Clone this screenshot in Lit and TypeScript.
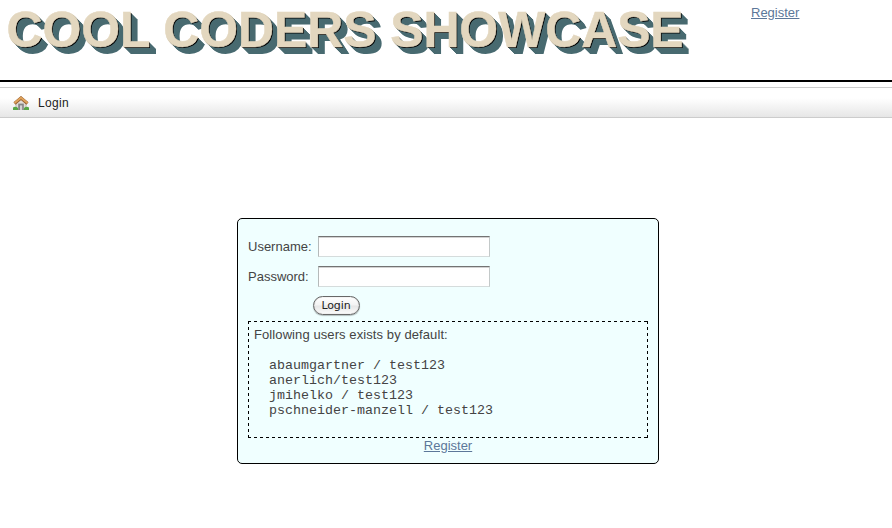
import { LitElement, html, css, svg } from "lit";
import { customElement } from "lit/decorators.js";

const users = [
  "abaumgartner / test123",
  "anerlich/test123",
  "jmihelko / test123",
  "pschneider-manzell / test123",
];

const houseIcon = svg`
  <path d="M3 7.500L8 3l5 4.500v6H3z" fill="#e2ddd8" stroke="#a9a5a1" stroke-width=".7"/>
  <path d="M5.200 7.600h5.600V14H5.200z" fill="#858585"/>
  <path d="M7 9.400h2.200V14H7z" fill="#d2d2d2"/>
  <path d="M0 11.500q2.500-1.800 5 .5V14H0zM11 12q2.500-2.300 5-.5V14h-5z" fill="#57a848"/>
  <path d="M1.500 7.400L8 2l6.500 5.400" fill="none" stroke="#98602f" stroke-width="3.200"/>
  <path d="M1.500 7L8 1.700 14.500 7" fill="none" stroke="#dfa25c" stroke-width="2"/>
`;

@customElement("app-root")
export class AppRoot extends LitElement {
  static styles = css`
    :host {
      display: block;
      height: 528px;
      overflow: hidden;
      background: #fff;
      color: #444;
      font: 13px/15px "Liberation Sans", Arial, sans-serif;
    }
    a { color: #5c7799; text-decoration: underline; }
    .header {
      display: flex;
      box-sizing: border-box;
      height: 82px;
      border-bottom: 2px solid #000;
    }
    .brand { width: 751px; flex: none; }
    .title {
      margin: 0;
      padding: 2px 0 0 6.500px;
      white-space: nowrap;
      font-size: 50px;
      line-height: 57px;
      font-weight: bold;
      letter-spacing: -0.13px;
      color: #e3d7bf;
      -webkit-text-stroke: 0.5px #e3d7bf;
      text-shadow: 1px 1px 0 #000, 2px 2px 0 #486a70, 3px 3px 0 #486a70,
        4px 4px 0 #486a70, 5px 5px 0 #486a70, 6px 6px 0 #486a70, 7px 7px 0 #486a70;
    }
    .top-link { padding-top: 5px; }
    .nav {
      display: flex;
      align-items: center;
      gap: 9px;
      box-sizing: border-box;
      height: 31px;
      margin-top: 5px;
      padding-left: 13px;
      border: solid #ccc;
      border-width: 1px 0;
      background: linear-gradient(#fff 0, #fff 35%, #e6e6e6 100%);
      color: #222;
      font-size: 12px;
      letter-spacing: 0.3px;
    }
    .crumb { padding-top: 2px; }
    .house { width: 16px; height: 16px; display: block; margin-top: 2px; }
    .panel {
      box-sizing: border-box;
      width: 422px;
      height: 246px;
      margin: 100px 0 0 237px;
      padding: 17px 10px 0;
      border: 1px solid #000;
      border-radius: 5px;
      background: #f0ffff;
    }
    .row { display: flex; height: 30px; }
    .label { width: 70px; padding-top: 3px; }
    .field {
      box-sizing: border-box;
      width: 172px;
      height: 21px;
      padding: 1px 3px;
      border: 1px solid;
      border-color: #737373 #c3c9c9 #d5dcdc #b5baba;
      border-radius: 0;
      box-shadow: inset 0 1px 0 #d3d3d3;
      background: #fff;
      outline: none;
    }
    .submit {
      display: block;
      box-sizing: border-box;
      width: 47px;
      height: 19px;
      margin: 0 0 6px 64.500px;
      padding: 0;
      border: 1px solid #686868;
      border-radius: 10px;
      background: linear-gradient(#fff, #f3f3f3 48%, #e6e6e6 52%, #fbfbfb);
      box-shadow: inset 0 0 1px #999, 0 1px 1px #b4c0c0;
      color: #222;
      font: 11px/14px "DejaVu Sans", sans-serif;
      letter-spacing: -0.1px;
    }
    .hint {
      box-sizing: border-box;
      height: 117px;
      padding: 6px 6px 0;
      --h: repeating-linear-gradient(90deg, #000 0 3px, transparent 3px 6px);
      --v: repeating-linear-gradient(#000 0 3px, transparent 3px 6px);
      background: var(--h) 0 0 / 100% 1px no-repeat, var(--h) 0 100% / 100% 1px no-repeat,
        var(--v) 0 0 / 1px 100% no-repeat, var(--v) 100% 0 / 1px 100% no-repeat;
    }
    .intro { letter-spacing: 0.09px; }
    .users {
      margin: 16px 0 0 15px;
      font: 13.33px/15px "Liberation Mono", "Courier New", monospace;
    }
    .bottom { text-align: center; }
  `;

  render() {
    return html`
      <header class="header">
        <div class="brand"><h1 class="title">COOL CODERS SHOWCASE</h1></div>
        <div class="top-link"><a href="#">Register</a></div>
      </header>
      <nav class="nav">
        <svg class="house" viewBox="0 0 16 16">${houseIcon}</svg>
        <span class="crumb">Login</span>
      </nav>
      <main class="panel">
        <div class="row"><label class="label" for="u">Username:</label><input class="field" id="u" /></div>
        <div class="row"><label class="label" for="p">Password:</label><input class="field" id="p" type="password" /></div>
        <button class="submit">Login</button>
        <section class="hint">
          <div class="intro">Following users exists by default:</div>
          <pre class="users">${users.join("\n")}</pre>
        </section>
        <div class="bottom"><a href="#">Register</a></div>
      </main>
    `;
  }
}
